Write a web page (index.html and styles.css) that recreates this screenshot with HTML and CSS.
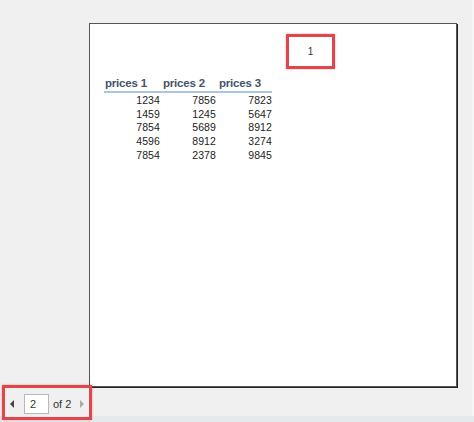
FILE: index.html
```html
<!DOCTYPE html>
<html lang="en">
<head>
    <meta charset="UTF-8">
    <meta name="viewport" content="width=device-width, initial-scale=1.0">
    <title>Report Preview</title>
    <link rel="stylesheet" href="styles.css">
</head>
<body>
    <div class="viewer">
        <div class="canvas">
            <div class="page">
                <div class="page-header">
                    <div class="page-number">1</div>
                </div>

                <table class="prices-table">
                    <thead>
                        <tr>
                            <th>prices 1</th>
                            <th>prices 2</th>
                            <th>prices 3</th>
                        </tr>
                    </thead>
                    <tbody>
                        <tr><td>1234</td><td>7856</td><td>7823</td></tr>
                        <tr><td>1459</td><td>1245</td><td>5647</td></tr>
                        <tr><td>7854</td><td>5689</td><td>8912</td></tr>
                        <tr><td>4596</td><td>8912</td><td>3274</td></tr>
                        <tr><td>7854</td><td>2378</td><td>9845</td></tr>
                    </tbody>
                </table>
            </div>

            <div class="pager">
                <span class="pager-arrow prev"></span>
                <div class="pager-input">2</div>
                <span class="pager-total">of 2</span>
                <span class="pager-arrow next"></span>
                <div class="highlight"></div>
            </div>
        </div>
        <div class="side-strip"></div>
    </div>
    <div class="status-strip"></div>
</body>
</html>
```

FILE: styles.css
```css
body {
    margin: 0;
    padding: 0;
    background: #f0f0f0;
    font-family: "Liberation Sans", Arial, sans-serif;
    color: #222;
    width: 474px;
    height: 422px;
    overflow: hidden;
}

.viewer {
    display: flex;
    height: 416px;
}

.canvas {
    width: 472px;
    padding: 23px 0 0 89px;
    box-sizing: border-box;
}

.side-strip {
    flex: 1;
    background: #f6f6f6;
}

/* Report page */
.page {
    width: 366px;
    height: 362px;
    background: #ffffff;
    border: 1px solid #555;
    box-shadow: 1px 1px 0 #222;
}

.page-header {
    padding: 10px 0 0 196px;
    height: 36px;
}

.page-number {
    width: 43px;
    height: 29px;
    border: 3px solid #e0474c;
    box-shadow: 0 0 2px rgba(224, 71, 76, 0.5);
    display: flex;
    align-items: center;
    justify-content: center;
    font-size: 10px;
    color: #333;
}

.prices-table {
    margin: 6px 0 0 14px;
    border-collapse: collapse;
}

.prices-table th {
    font-size: 11.5px;
    font-weight: bold;
    color: #44546a;
    text-align: left;
    padding: 0 0 1px 3px;
    height: 14px;
    width: 53px;
    border-bottom: 2px solid #a9c6e3;
    letter-spacing: -0.2px;
}

.prices-table th:first-child {
    padding-left: 1px;
    width: 55px;
}

.prices-table td {
    font-size: 10.5px;
    text-align: right;
    height: 13.75px;
    padding: 0;
    color: #222;
    letter-spacing: 0.1px;
}

/* Page navigation */
.pager {
    position: relative;
    display: flex;
    align-items: center;
    height: 20px;
    margin: 7px 0 0 -89px;
    padding-left: 10px;
    width: 80px;
    font-size: 11px;
    color: #333;
}

.pager-arrow {
    width: 0;
    height: 0;
    border-top: 4px solid transparent;
    border-bottom: 4px solid transparent;
}

.pager-arrow.prev {
    border-right: 4px solid #444;
}

.pager-arrow.next {
    border-left: 4px solid #aaa;
    margin-left: 9px;
}

.pager-input {
    width: 18px;
    height: 18px;
    margin-left: 10px;
    padding-left: 5px;
    background: #fff;
    border: 1px solid #b8b8b8;
    line-height: 18px;
    font-size: 11px;
}

.pager-total {
    margin-left: 4px;
}

.highlight {
    position: absolute;
    left: 2px;
    top: -9px;
    width: 84px;
    height: 29px;
    border: 3px solid #e0474c;
    box-shadow: 0 0 2px rgba(224, 71, 76, 0.5);
}

.status-strip {
    height: 6px;
    background: #e6e9ec;
}
```
